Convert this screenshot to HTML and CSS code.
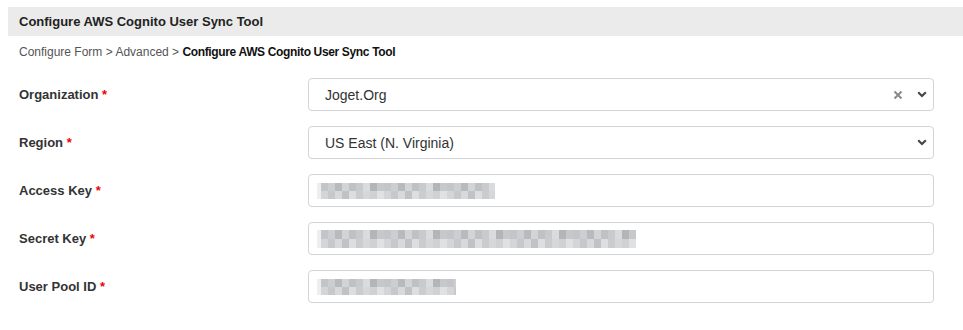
FILE: index.html
```html
<!DOCTYPE html>
<html lang="en">
<head>
    <meta charset="UTF-8">
    <meta name="viewport" content="width=device-width, initial-scale=1.0">
    <title>Configure AWS Cognito User Sync Tool</title>
    <link rel="stylesheet" href="styles.css">
</head>
<body>
    <div class="page-title">Configure AWS Cognito User Sync Tool</div>

    <div class="breadcrumb">
        Configure Form &gt; Advanced &gt; <strong>Configure AWS Cognito User Sync Tool</strong>
    </div>

    <form class="config-form">
        <div class="form-row">
            <label>Organization <span class="req">*</span></label>
            <div class="field select">
                <span class="value">Joget.Org</span>
                <svg class="clear" width="10" height="10" viewBox="0 0 10 10"><path d="M1.5 1.5l7 7M8.5 1.5l-7 7" stroke="#8a8a8a" stroke-width="2" fill="none"/></svg>
                <svg class="chevron" width="10" height="7" viewBox="0 0 10 7"><path d="M1.2 1.3l3.8 3.8 3.8-3.8" stroke="#444" stroke-width="2.1" fill="none"/></svg>
            </div>
        </div>

        <div class="form-row">
            <label>Region <span class="req">*</span></label>
            <div class="field select">
                <span class="value">US East (N. Virginia)</span>
                <svg class="chevron" width="10" height="7" viewBox="0 0 10 7"><path d="M1.2 1.3l3.8 3.8 3.8-3.8" stroke="#444" stroke-width="2.1" fill="none"/></svg>
            </div>
        </div>

        <div class="form-row">
            <label>Access Key <span class="req">*</span></label>
            <div class="field">
                <span class="blur blur-access"></span>
            </div>
        </div>

        <div class="form-row">
            <label>Secret Key <span class="req">*</span></label>
            <div class="field">
                <span class="blur blur-secret"></span>
            </div>
        </div>

        <div class="form-row">
            <label>User Pool ID <span class="req">*</span></label>
            <div class="field">
                <span class="blur blur-pool"></span>
            </div>
        </div>
    </form>
</body>
</html>
```

FILE: styles.css
```css
body {
    font-family: "Liberation Sans", Arial, sans-serif;
    background-color: #fff;
    color: #333;
    margin: 0;
    padding: 7px 0 0 8px;
}
.page-title {
    background-color: #ebebeb;
    height: 29px;
    line-height: 29px;
    padding-left: 11px;
    font-size: 13px;
    font-weight: bold;
    color: #222;
}
.breadcrumb {
    margin-top: 9px;
    padding-left: 11px;
    font-size: 12px;
    line-height: 14px;
    color: #555;
}
.breadcrumb strong {
    color: #111;
    letter-spacing: -0.35px;
}
.config-form {
    margin-top: 19px;
    padding: 0 29px 0 11px;
    display: flex;
    flex-direction: column;
    gap: 15px;
}
.form-row {
    display: flex;
    align-items: center;
}
.form-row label {
    width: 289px;
    flex-shrink: 0;
    font-size: 13px;
    font-weight: bold;
    color: #333;
}
.req {
    color: #e00;
}
.field {
    flex: 1;
    height: 33px;
    box-sizing: border-box;
    border: 1px solid #d2d4d8;
    border-radius: 4px;
    display: flex;
    align-items: center;
    padding: 0 8px;
}
.select {
    padding: 0 6px 0 16px;
}
.select .value {
    flex: 1;
    font-size: 14px;
    color: #333;
}
.clear {
    margin-right: 14px;
}
.blur {
    display: inline-block;
    height: 16px;
    background-image:
        repeating-linear-gradient(90deg, #c3c5c8 0 7px, #ccced1 7px 14px, #b8babd 14px 21px, #d2d4d6 21px 28px, #bfc1c4 28px 35px, #c8cacd 35px 42px, #dadbdd 42px 49px, #b3b5b8 49px 56px, #c6c8ca 56px 63px),
        repeating-linear-gradient(90deg, #d3d5d7 0 7px, #c6c8cb 7px 14px, #d8d9db 14px 21px, #c0c2c5 21px 28px, #dddedf 28px 35px, #caccce 35px 42px, #d6d7d9 42px 49px, #cfd1d3 49px 56px, #e0e1e2 56px 63px);
    background-size: 100% 50%;
    background-position: 0 0, 0 100%;
    background-repeat: no-repeat;
    border-left: 4px solid #eeeeee;
}
.blur-access {
    width: 174px;
}
.blur-secret {
    width: 315px;
    height: 18px;
}
.blur-pool {
    width: 135px;
}
```
